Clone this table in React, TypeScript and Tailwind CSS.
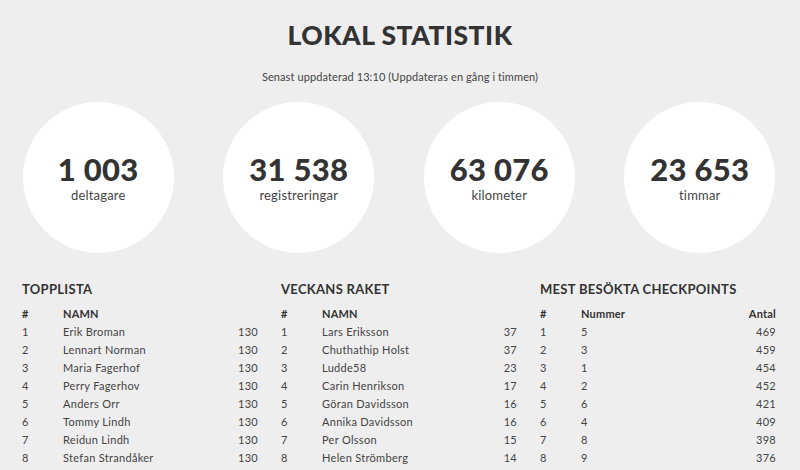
import React from "react";

const stats = [
  { n: "1 003", l: "deltagare" },
  { n: "31 538", l: "registreringar" },
  { n: "63 076", l: "kilometer" },
  { n: "23 653", l: "timmar" },
];

const top = [
  ["1", "Erik Broman", "130"],
  ["2", "Lennart Norman", "130"],
  ["3", "Maria Fagerhof", "130"],
  ["4", "Perry Fagerhov", "130"],
  ["5", "Anders Orr", "130"],
  ["6", "Tommy Lindh", "130"],
  ["7", "Reidun Lindh", "130"],
  ["8", "Stefan Strandåker", "130"],
];
const raket = [
  ["1", "Lars Eriksson", "37"],
  ["2", "Chuthathip Holst", "37"],
  ["3", "Ludde58", "23"],
  ["4", "Carin Henrikson", "17"],
  ["5", "Göran Davidsson", "16"],
  ["6", "Annika Davidsson", "16"],
  ["7", "Per Olsson", "15"],
  ["8", "Helen Strömberg", "14"],
];
const cps = [
  ["1", "5", "469"],
  ["2", "3", "459"],
  ["3", "1", "454"],
  ["4", "2", "452"],
  ["5", "6", "421"],
  ["6", "4", "409"],
  ["7", "8", "398"],
  ["8", "9", "376"],
];

function Table({ title, h2, h3, rows }: { title: string; h2: string; h3: string; rows: string[][] }) {
  return (
    <div className="w-[236px]">
      <div className="text-[13px] leading-[16px] font-bold tracking-[0.3px] text-[#333333]">{title}</div>
      <div className="mt-[8px] flex h-[18px] items-center text-[11px] font-bold tracking-[0.2px] text-[#333333]">
        <div className="w-[41px]">#</div>
        <div className="flex-1">{h2}</div>
        <div className="text-right">{h3}</div>
      </div>
      {rows.map((r) => (
        <div key={r[0]} className="flex h-[18px] items-center text-[11px] tracking-[0.3px] text-[#444444]">
          <div className="w-[41px]">{r[0]}</div>
          <div className="flex-1">{r[1]}</div>
          <div className="text-right">{r[2]}</div>
        </div>
      ))}
    </div>
  );
}

export default function App() {
  return (
    <div
      className="min-h-[470px] bg-[#eeeeee] text-[#333333]"
      style={{ fontFamily: "Lato, 'Noto Sans', sans-serif" }}
    >
      <h1 className="pt-[20px] text-center text-[26.5px] leading-[30px] font-black tracking-[0.5px]">
        LOKAL STATISTIK
      </h1>
      <p className="mt-[20px] text-center text-[11px] leading-[14px] tracking-[0.1px] text-[#444444]">
        Senast uppdaterad 13:10 (Uppdateras en gång i timmen)
      </p>
      <div className="mt-[18px] ml-[-2px] grid grid-cols-4">
        {stats.map((s) => (
          <div key={s.l} className="flex justify-center">
            <div className="flex h-[151px] w-[151px] flex-col items-center justify-center rounded-full bg-white">
              <div className="text-[31px] leading-[32px] font-black tracking-[0.3px]">{s.n}</div>
              <div className="mt-[2px] text-[13px] leading-[16px] tracking-[0.2px] text-[#444444]">{s.l}</div>
            </div>
          </div>
        ))}
      </div>
      <div className="mt-[28px] flex gap-[23px] px-[22px]">
        <Table title="TOPPLISTA" h2="NAMN" h3="" rows={top} />
        <Table title="VECKANS RAKET" h2="NAMN" h3="" rows={raket} />
        <Table title="MEST BESÖKTA CHECKPOINTS" h2="Nummer" h3="Antal" rows={cps} />
      </div>
    </div>
  );
}
